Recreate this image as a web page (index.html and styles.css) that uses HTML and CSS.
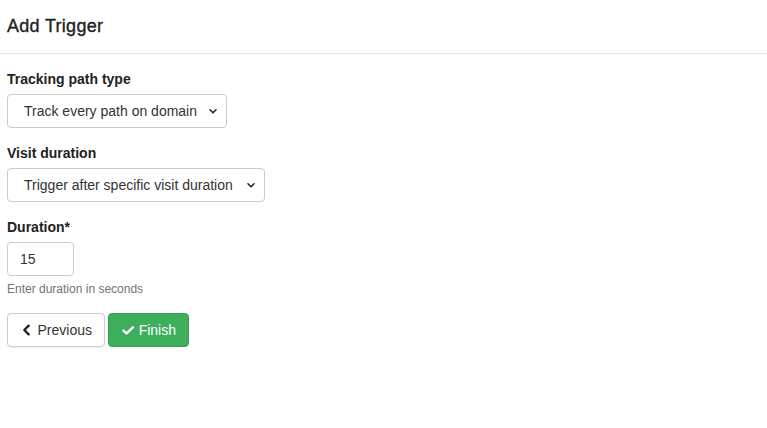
FILE: index.html
```html
<!DOCTYPE html>
<html lang="en">
<head>
<meta charset="utf-8">
<title>Add Trigger</title>
<link rel="stylesheet" href="styles.css">
</head>
<body>
<div class="modal">
  <div class="modal-header">
    <h4 class="modal-title">Add Trigger</h4>
  </div>
  <div class="modal-body">
    <div class="form-group">
      <label class="control-label">Tracking path type</label>
      <div class="select-wrap">
        <select class="form-select select-path">
          <option>Track every path on domain</option>
        </select>
        <svg class="caret" width="10" height="7" viewBox="0 0 10 7"><path d="M2 1.8 L5 4.8 L8 1.8" fill="none" stroke="#222" stroke-width="1.6" stroke-linecap="round" stroke-linejoin="round"/></svg>
      </div>
    </div>
    <div class="form-group">
      <label class="control-label">Visit duration</label>
      <div class="select-wrap">
        <select class="form-select select-visit">
          <option>Trigger after specific visit duration</option>
        </select>
        <svg class="caret" width="10" height="7" viewBox="0 0 10 7"><path d="M2 1.8 L5 4.8 L8 1.8" fill="none" stroke="#222" stroke-width="1.6" stroke-linecap="round" stroke-linejoin="round"/></svg>
      </div>
    </div>
    <div class="form-group">
      <label class="control-label">Duration*</label>
      <input class="form-input" type="text" value="15">
      <span class="help-block">Enter duration in seconds</span>
    </div>
    <div class="actions">
      <button class="btn btn-default" type="button">
        <svg width="9" height="12" viewBox="0 0 9 12"><path d="M7 1.5 L2.5 6 L7 10.5" fill="none" stroke="#222" stroke-width="2.6" stroke-linecap="round" stroke-linejoin="round"/></svg>
        Previous
      </button>
      <button class="btn btn-success" type="button">
        <svg width="15" height="11" viewBox="0 0 15 11"><path d="M1.8 5.6 L5.4 9 L13 1.8" fill="none" stroke="#fff" stroke-width="2.9" stroke-linecap="round" stroke-linejoin="round"/></svg>
        Finish
      </button>
    </div>
  </div>
</div>
</body>
</html>
```
FILE: styles.css
```css
* { box-sizing: border-box; }
html, body {
  margin: 0;
  padding: 0;
  background: #fff;
}
body {
  font-family: "Liberation Sans", Arial, Helvetica, sans-serif;
  font-size: 14px;
  line-height: 20px;
  color: #333;
}
.modal-header {
  padding: 15px 7px 15px;
  height: 54px;
  border-bottom: 1px solid #e5e5e5;
}
.modal-title {
  margin: 0;
  font-size: 18px;
  line-height: 22px;
  font-weight: normal;
  letter-spacing: 0.3px;
  -webkit-text-stroke: 0.35px #222;
  color: #222;
}
.modal-body {
  padding: 15px 7px;
}
.form-group {
  margin-bottom: 15px;
  display: flex;
  flex-direction: column;
  align-items: flex-start;
}
.control-label {
  display: block;
  font-weight: bold;
  margin-bottom: 5px;
  color: #222;
}
.select-wrap {
  position: relative;
  display: inline-block;
}
.form-select {
  -webkit-appearance: none;
  appearance: none;
  height: 34px;
  padding: 6px 28px 6px 16px;
  font-family: inherit;
  font-size: 14px;
  color: #333;
  background: #fff;
  border: 1px solid #ccc;
  border-radius: 4px;
  display: block;
}
.select-path { width: 220px; }
.select-visit { width: 258px; }
.caret {
  position: absolute;
  right: 9px;
  top: 14px;
  pointer-events: none;
}
.form-input {
  width: 67px;
  height: 34px;
  padding: 6px 12px;
  font-family: inherit;
  font-size: 14px;
  color: #333;
  border: 1px solid #ccc;
  border-radius: 4px;
  display: block;
}
.help-block {
  display: block;
  margin-top: 5px;
  font-size: 12px;
  line-height: 17px;
  color: #737373;
}
.actions {
  display: flex;
  gap: 3px;
}
.btn {
  display: inline-flex;
  align-items: center;
  gap: 5px;
  height: 34px;
  padding: 6px 12px 6px 14px;
  font-family: inherit;
  font-size: 14px;
  border-radius: 4px;
  cursor: pointer;
}
.btn-default {
  width: 98px;
  background: #fff;
  color: #333;
  border: 1px solid #ccc;
  box-shadow: 0 1px 1px rgba(0,0,0,0.05);
}
.btn-default svg { margin-right: 2px; }
.btn-success {
  width: 81px;
  background: #3dae5c;
  color: #fff;
  border: 1px solid #36a153;
  padding-left: 13px;
  gap: 4px;
}
```
